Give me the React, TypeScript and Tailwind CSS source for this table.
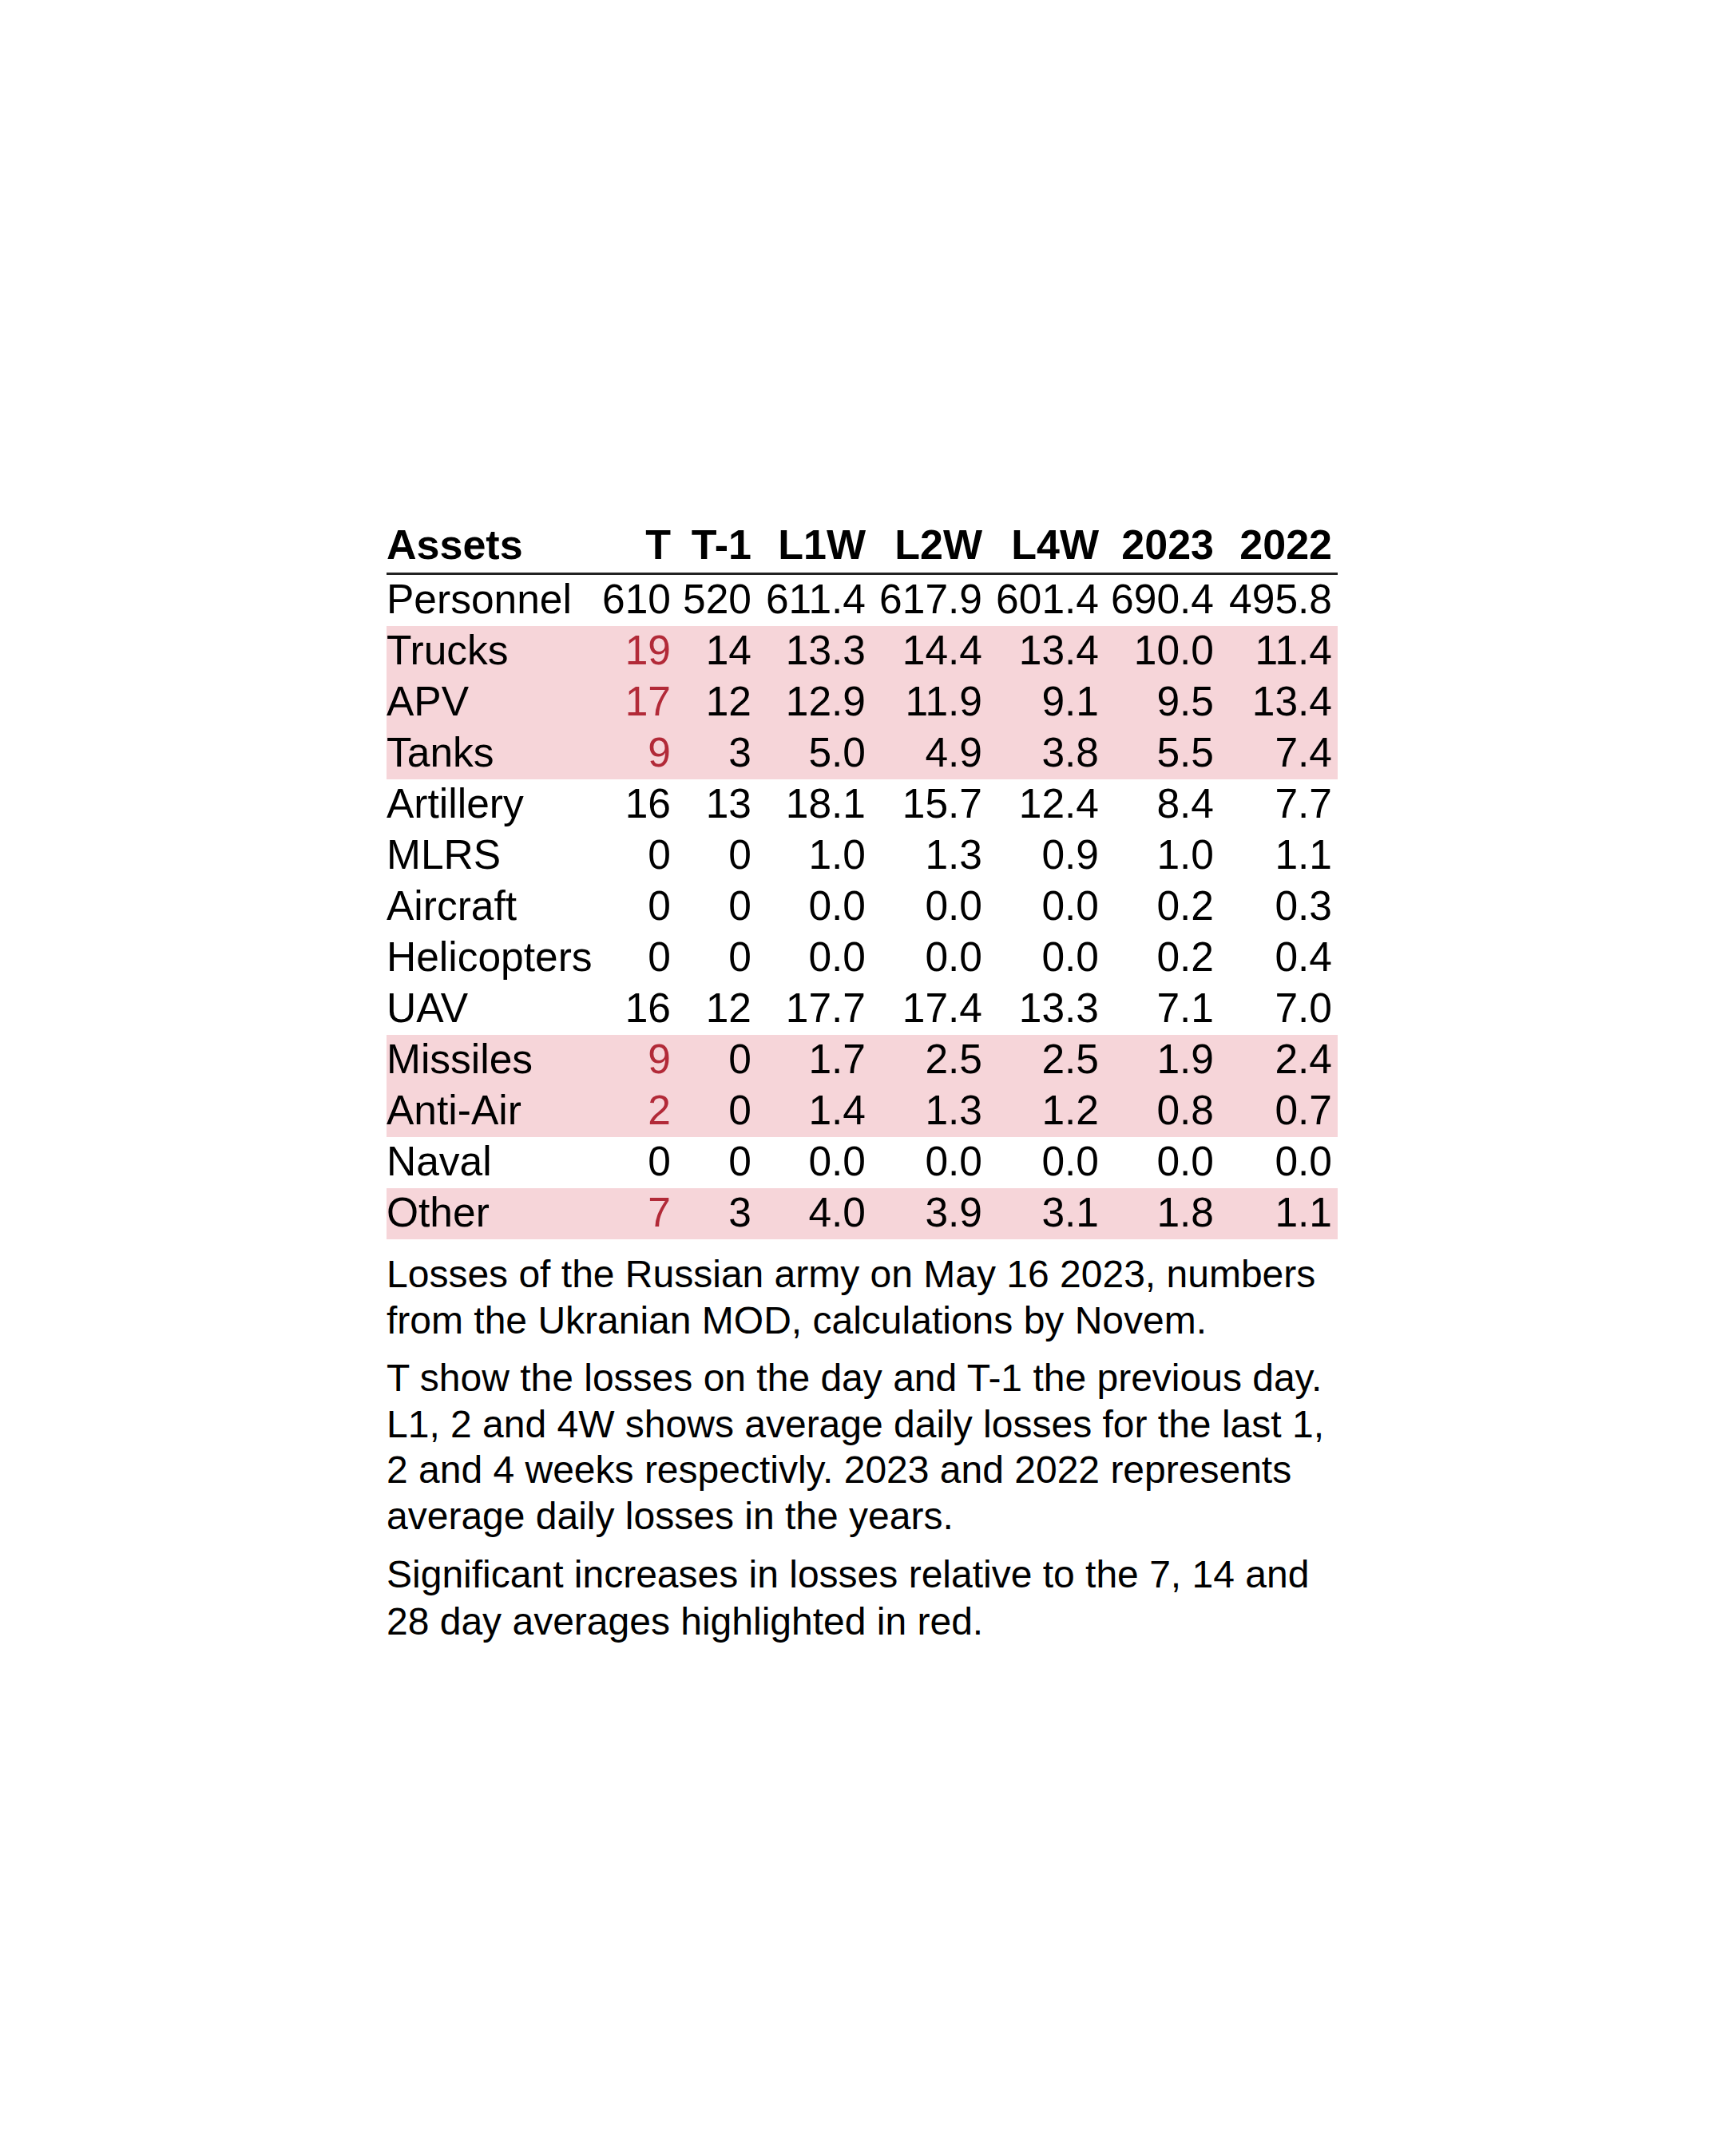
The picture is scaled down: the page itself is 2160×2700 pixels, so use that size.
import React from "react";

type Row = { name: string; vals: string[]; hl: boolean };

const rows: Row[] = [
  { name: "Personnel", vals: ["610", "520", "611.4", "617.9", "601.4", "690.4", "495.8"], hl: false },
  { name: "Trucks", vals: ["19", "14", "13.3", "14.4", "13.4", "10.0", "11.4"], hl: true },
  { name: "APV", vals: ["17", "12", "12.9", "11.9", "9.1", "9.5", "13.4"], hl: true },
  { name: "Tanks", vals: ["9", "3", "5.0", "4.9", "3.8", "5.5", "7.4"], hl: true },
  { name: "Artillery", vals: ["16", "13", "18.1", "15.7", "12.4", "8.4", "7.7"], hl: false },
  { name: "MLRS", vals: ["0", "0", "1.0", "1.3", "0.9", "1.0", "1.1"], hl: false },
  { name: "Aircraft", vals: ["0", "0", "0.0", "0.0", "0.0", "0.2", "0.3"], hl: false },
  { name: "Helicopters", vals: ["0", "0", "0.0", "0.0", "0.0", "0.2", "0.4"], hl: false },
  { name: "UAV", vals: ["16", "12", "17.7", "17.4", "13.3", "7.1", "7.0"], hl: false },
  { name: "Missiles", vals: ["9", "0", "1.7", "2.5", "2.5", "1.9", "2.4"], hl: true },
  { name: "Anti-Air", vals: ["2", "0", "1.4", "1.3", "1.2", "0.8", "0.7"], hl: true },
  { name: "Naval", vals: ["0", "0", "0.0", "0.0", "0.0", "0.0", "0.0"], hl: false },
  { name: "Other", vals: ["7", "3", "4.0", "3.9", "3.1", "1.8", "1.1"], hl: true },
];

const headers = ["T", "T-1", "L1W", "L2W", "L4W", "2023", "2022"];

const gridCols =
  "grid grid-cols-[259px_102px_101px_143px_146px_146px_144px_150px]";

export default function App() {
  return (
    <div
      className="w-[2160px] h-[2700px] bg-white text-black"
      style={{ fontFamily: '"Liberation Sans", Arial, sans-serif' }}
    >
      <div className="ml-[484px] pt-[652px] w-[1191px]">
        {/* header */}
        <div className={`${gridCols} h-[68px] border-b-[3px] border-[#222222] font-bold text-[52px] leading-[60px]`}>
          <div className="text-left">Assets</div>
          {headers.map((h, i) => (
            <div key={h} className={`text-right ${i === 6 ? "pr-[7px]" : "pr-[5px]"}`}>
              {h}
            </div>
          ))}
        </div>
        {/* body */}
        {rows.map((r) => (
          <div
            key={r.name}
            className={`${gridCols} h-[64px] text-[51.5px] leading-[60px] ${r.hl ? "bg-[#f6d5d9]" : "bg-white"}`}
          >
            <div className="text-left whitespace-nowrap">{r.name}</div>
            {r.vals.map((v, i) => (
              <div
                key={i}
                className={`text-right whitespace-nowrap ${i === 6 ? "pr-[7px]" : "pr-[5px]"} ${
                  i === 0 && r.hl ? "text-[#b22a38]" : ""
                }`}
              >
                {v}
              </div>
            ))}
          </div>
        ))}
        {/* caption */}
        <div className="text-[48px] leading-[57.5px] mt-[15px]">
          <p>
            Losses of the Russian army on May 16 2023, numbers from the Ukranian MOD, calculations by Novem.
          </p>
          <p className="mt-[15px]">
            T show the losses on the day and T-1 the previous day. L1, 2 and 4W shows average daily losses for the last 1, 2 and 4 weeks respectivly. 2023 and 2022 represents average daily losses in the years.
          </p>
          <p className="mt-[15px] leading-[59px]">
            Significant increases in losses relative to the 7, 14 and 28 day averages highlighted in red.
          </p>
        </div>
      </div>
    </div>
  );
}
